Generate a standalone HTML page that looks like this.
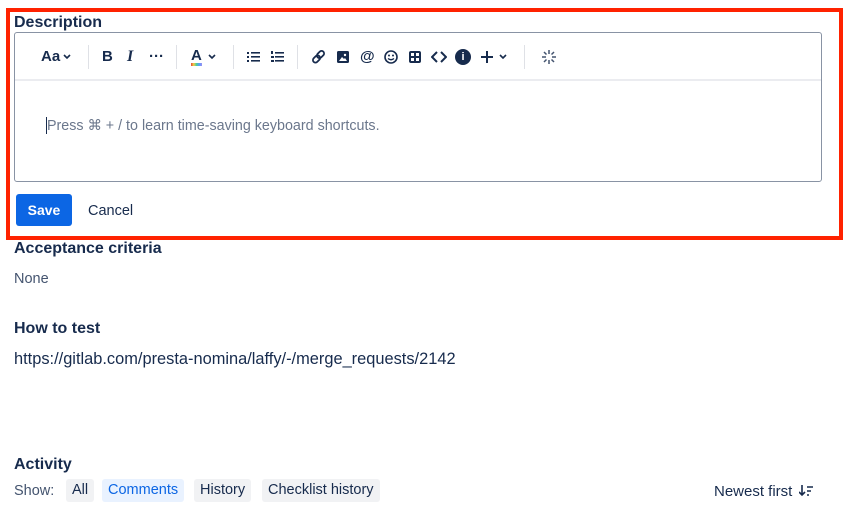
<!DOCTYPE html>
<html><head><meta charset="utf-8"><style>
*{box-sizing:border-box;margin:0;padding:0}
body{width:852px;height:520px;background:#fff;font-family:"Liberation Sans",sans-serif;color:#172b4d;position:relative;overflow:hidden}
.abs{position:absolute}
.red{left:6px;top:8px;width:837px;height:232px;border:4px solid #ff2200}
h3{font-size:16px;font-weight:bold;color:#172b4d;position:absolute;white-space:nowrap}
.ed{left:14px;top:32px;width:808px;height:150px;border:1px solid #8993a4;border-radius:3px}
.tb{left:15px;top:33px;width:806px;height:48px;border-bottom:2px solid #ebecf0}
.ic{position:absolute;top:48px;font-size:15px;font-weight:bold;color:#172b4d}
.sep{position:absolute;top:45px;width:1px;height:24px;background:#dfe1e6}
svg.s{position:absolute}
.ph{left:47px;top:118px;font-size:14.3px;color:#6b778c}
.cur{left:46px;top:117px;width:1px;height:17px;background:#172b4d}
.save{left:16px;top:194px;width:56px;height:32px;background:#0c66e4;border-radius:3px;color:#fff;font-weight:bold;font-size:14px;text-align:center;line-height:32px}
.tag{position:absolute;top:479px;height:23px;line-height:23px;padding:0 6px;background:#f1f2f4;border-radius:3px;font-size:14.5px;color:#172b4d}
</style></head><body>
<div class="abs red"></div>
<h3 style="left:14px;top:14px">Description</h3>
<div class="abs ed"></div>
<div class="abs tb"></div>
<span class="ic" style="left:41px">Aa</span>
<svg class="s" style="left:63px;top:54px" width="8" height="6"><polyline points="1,1 4,4 7,1" fill="none" stroke="#172b4d" stroke-width="1.6"/></svg>
<div class="sep" style="left:88px"></div>
<span class="ic" style="left:102px">B</span>
<span class="ic" style="left:127px;font-style:italic;font-family:'Liberation Serif',serif;font-size:16px">I</span>
<span class="ic" style="left:149px">···</span>
<div class="sep" style="left:176px"></div>
<span class="ic" style="left:191px;line-height:14px;top:49px">A</span>
<div class="abs" style="left:191px;top:63px;width:11px;height:3px;background:linear-gradient(90deg,#e2483d,#f5cd47,#4bce97,#579dff,#9f8fef)"></div>
<svg class="s" style="left:208px;top:54px" width="8" height="6"><polyline points="1,1 4,4 7,1" fill="none" stroke="#172b4d" stroke-width="1.6"/></svg>
<div class="sep" style="left:233px"></div>
<svg class="s" style="left:247px;top:51px" width="14" height="12"><g fill="#172b4d"><rect x="0" y="1" width="2" height="2"/><rect x="0" y="5" width="2" height="2"/><rect x="0" y="9" width="2" height="2"/><rect x="4" y="1" width="9" height="1.6"/><rect x="4" y="5" width="9" height="1.6"/><rect x="4" y="9" width="9" height="1.6"/></g></svg>
<svg class="s" style="left:271px;top:51px" width="14" height="12"><g fill="#172b4d"><rect x="0" y="0" width="2" height="3"/><rect x="0" y="5" width="3" height="2"/><rect x="0" y="9" width="3" height="2"/><rect x="4" y="1" width="9" height="1.6"/><rect x="4" y="5" width="9" height="1.6"/><rect x="4" y="9" width="9" height="1.6"/></g></svg>
<div class="sep" style="left:297px"></div>
<svg class="s" style="left:312px;top:50px" width="14" height="14"><g fill="none" stroke="#172b4d" stroke-width="1.8"><rect x="6" y="0.5" width="5" height="8" rx="2.5" transform="rotate(45 8.5 4.5)"/><rect x="2" y="5" width="5" height="8" rx="2.5" transform="rotate(45 4.5 9)"/></g></svg>
<svg class="s" style="left:337px;top:51px" width="12" height="12"><rect width="12" height="12" rx="1.5" fill="#172b4d"/><polygon points="2,10 5,6 7,8 8,7 10,10" fill="#fff"/><circle cx="8" cy="4" r="1.2" fill="#fff"/></svg>
<span class="ic" style="left:360px">@</span>
<svg class="s" style="left:384px;top:50px" width="14" height="14"><circle cx="7" cy="7" r="6" fill="none" stroke="#172b4d" stroke-width="1.6"/><circle cx="5" cy="5.5" r="1" fill="#172b4d"/><circle cx="9" cy="5.5" r="1" fill="#172b4d"/><path d="M4 8.5 Q7 11 10 8.5" fill="none" stroke="#172b4d" stroke-width="1.4"/></svg>
<div class="abs" style="left:409px;top:51px;width:12px;height:12px;border:2px solid #172b4d;border-radius:2px;background:linear-gradient(#172b4d,#172b4d) center/2px 100% no-repeat,linear-gradient(#172b4d,#172b4d) center/100% 2px no-repeat"></div>
<svg class="s" style="left:431px;top:51px" width="16" height="12"><polyline points="6,1 1,6 6,11" fill="none" stroke="#172b4d" stroke-width="2"/><polyline points="10,1 15,6 10,11" fill="none" stroke="#172b4d" stroke-width="2"/></svg>
<div class="abs" style="left:455px;top:49px;width:16px;height:16px;border-radius:50%;background:#172b4d;color:#fff;font-size:11px;font-weight:bold;text-align:center;line-height:16px">i</div>
<svg class="s" style="left:481px;top:51px" width="12" height="12"><path d="M6 0V12M0 6H12" stroke="#172b4d" stroke-width="2"/></svg>
<svg class="s" style="left:499px;top:54px" width="8" height="6"><polyline points="1,1 4,4 7,1" fill="none" stroke="#172b4d" stroke-width="1.6"/></svg>
<div class="sep" style="left:524px"></div>
<svg class="s" style="left:542px;top:50px" width="14" height="14"><g stroke="#44546f" stroke-width="1.5"><path d="M7 0V4M7 10V14M0 7H4M10 7H14M2 2L4.5 4.5M9.5 9.5L12 12M12 2L9.5 4.5M4.5 9.5L2 12"/></g></svg>
<div class="abs cur"></div>
<div class="abs ph">Press ⌘ + / to learn time-saving keyboard shortcuts.</div>
<div class="abs save">Save</div>
<div class="abs" style="left:88px;top:203px;font-size:14.5px">Cancel</div>
<h3 style="left:14px;top:240px">Acceptance criteria</h3>
<div class="abs" style="left:14px;top:271px;font-size:14.5px;color:#44546f">None</div>
<h3 style="left:14px;top:320px">How to test</h3>
<div class="abs" style="left:14px;top:350px;font-size:16.4px">https://gitlab.com/presta-nomina/laffy/-/merge_requests/2142</div>
<h3 style="left:14px;top:456px">Activity</h3>
<div class="abs" style="left:14px;top:483px;font-size:14.5px;color:#44546f">Show:</div>
<div class="tag" style="left:66px">All</div>
<div class="tag" style="left:102px;background:#e9f2ff;color:#0c66e4">Comments</div>
<div class="tag" style="left:194px">History</div>
<div class="tag" style="left:262px">Checklist history</div>
<div class="abs" style="left:714px;top:483px;font-size:15px">Newest first</div>
<svg class="s" style="left:799px;top:485px" width="14" height="12"><path d="M3 0V10M0 7L3 10L6 7M8 2H14M8 6H12M8 10H10" fill="none" stroke="#172b4d" stroke-width="1.6"/></svg>
</body></html>
